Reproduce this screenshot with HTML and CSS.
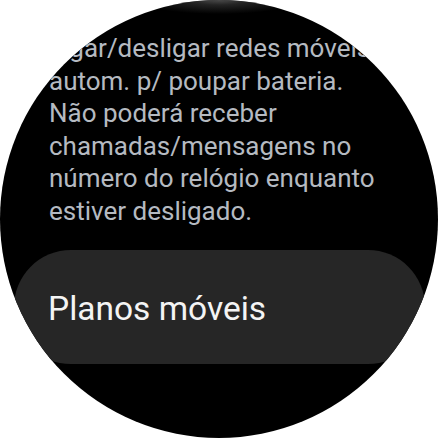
FILE: index.html
```html
<!DOCTYPE html>
<html lang="pt">
<head>
<meta charset="utf-8">
<link rel="stylesheet" href="styles.css">
</head>
<body>
<div class="watch">
  <div class="content">
    <p class="desc">Ligar/desligar redes móveis<br>autom. p/ poupar bateria.<br>Não poderá receber<br>chamadas/mensagens no<br>número do relógio enquanto<br>estiver desligado.</p>
    <div class="card"><span class="card-label">Planos móveis</span></div>
  </div>
  <div class="top-glow"></div>
</div>
</body>
</html>
```
FILE: styles.css
```css
html, body {
  margin: 0;
  padding: 0;
  background: #ffffff;
}
.watch {
  position: relative;
  width: 438px;
  height: 438px;
  border-radius: 50%;
  overflow: hidden;
  background: #000000;
}
.content {
  display: flex;
  flex-direction: column;
  padding-top: 32px;
}
.desc {
  margin: 0 0 23px 49px;
  font-family: Roboto, "Noto Sans", sans-serif;
  font-size: 26px;
  line-height: 32.5px;
  color: #b5bac1;
  white-space: nowrap;
}
.card {
  margin-left: 14px;
  width: 411px;
  height: 114px;
  border-radius: 57px;
  background: #262626;
  display: flex;
  align-items: center;
  padding: 2px 0 0 34px;
  box-sizing: border-box;
}
.card-label {
  font-family: Roboto, "Noto Sans", sans-serif;
  font-size: 33.5px;
  color: #f4f4f4;
}
.top-glow {
  position: absolute;
  left: 139px;
  top: 0;
  width: 160px;
  height: 14px;
  background: radial-gradient(ellipse 50% 100% at 50% 0%, #4a4a4a 0%, rgba(60,60,60,0.6) 35%, rgba(0,0,0,0) 100%);
}
```
